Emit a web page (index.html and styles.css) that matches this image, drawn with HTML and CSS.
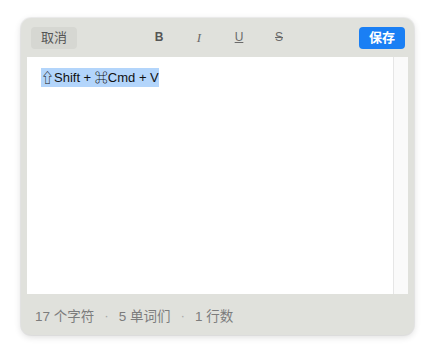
FILE: index.html
```html
<html>
    <head>
        <title>Editor</title>
        <link rel="stylesheet" href="styles.css">
    </head>
    <body>
        <div class="window">
            <div class="toolbar">
                <div class="btn cancel">取消</div>
                <div class="formats">
                    <span class="fmt bold">B</span>
                    <span class="fmt italic">I</span>
                    <span class="fmt under">U</span>
                    <span class="fmt strike">S</span>
                </div>
                <div class="btn save">保存</div>
            </div>
            <div class="editor">
                <div class="content">
                    <span class="selected">⇧Shift + ⌘Cmd + V</span>
                </div>
                <div class="scrollTrack"></div>
            </div>
            <div class="status">
                <span>17 个字符</span>
                <span class="dot">·</span>
                <span>5 单词们</span>
                <span class="dot">·</span>
                <span>1 行数</span>
            </div>
        </div>
    </body>
</html>
```

FILE: styles.css
```css
body {
    margin: 0;
    background-color: white;
    font-family: "Liberation Sans", "Noto Sans CJK SC", sans-serif;
}
.window {
    margin: 18px 0 0 21px;
    width: 393px;
    height: 317px;
    background-color: #e0e1dc;
    border-radius: 10px;
    box-shadow: 0 2px 7px rgba(0, 0, 0, 0.14), 0 0 0 1px rgba(0, 0, 0, 0.05);
    display: flex;
    flex-direction: column;
    overflow: hidden;
}
.toolbar {
    height: 39px;
    display: flex;
    align-items: center;
    padding: 0 9px 0 10px;
}
.btn {
    height: 22px;
    line-height: 22px;
    padding: 0 10px;
    border-radius: 4px;
    font-size: 13px;
}
.cancel {
    background-color: #d6d7d2;
    color: #555555;
}
.save {
    background-color: #1a7ff4;
    color: white;
    font-weight: bold;
}
.formats {
    flex: 1;
    display: flex;
    justify-content: center;
    gap: 28px;
    padding-left: 2px;
    color: #6a6a6a;
    font-size: 12px;
}
.fmt {
    width: 12px;
    text-align: center;
}
.bold {
    font-weight: bold;
    color: #555555;
}
.italic {
    font-family: "Liberation Serif", serif;
    font-style: italic;
    font-size: 13px;
}
.under {
    text-decoration: underline;
}
.strike {
    text-decoration: line-through;
}
.editor {
    margin: 0 6px 0 6px;
    height: 237px;
    background-color: white;
    display: flex;
}
.content {
    flex: 1;
    padding: 10px 0 0 14px;
    font-size: 13px;
    color: #111111;
}
.selected {
    background-color: #b3d5fb;
    padding: 2px 0;
}
.scrollTrack {
    width: 14px;
    background-color: #fafafa;
    border-left: 1px solid #e6e6e6;
}
.status {
    flex: 1;
    display: flex;
    align-items: center;
    padding: 1px 0 0 14px;
    font-size: 13.5px;
    color: #7c7c7c;
    gap: 10px;
}
.dot {
    color: #a8a8a8;
}
```
